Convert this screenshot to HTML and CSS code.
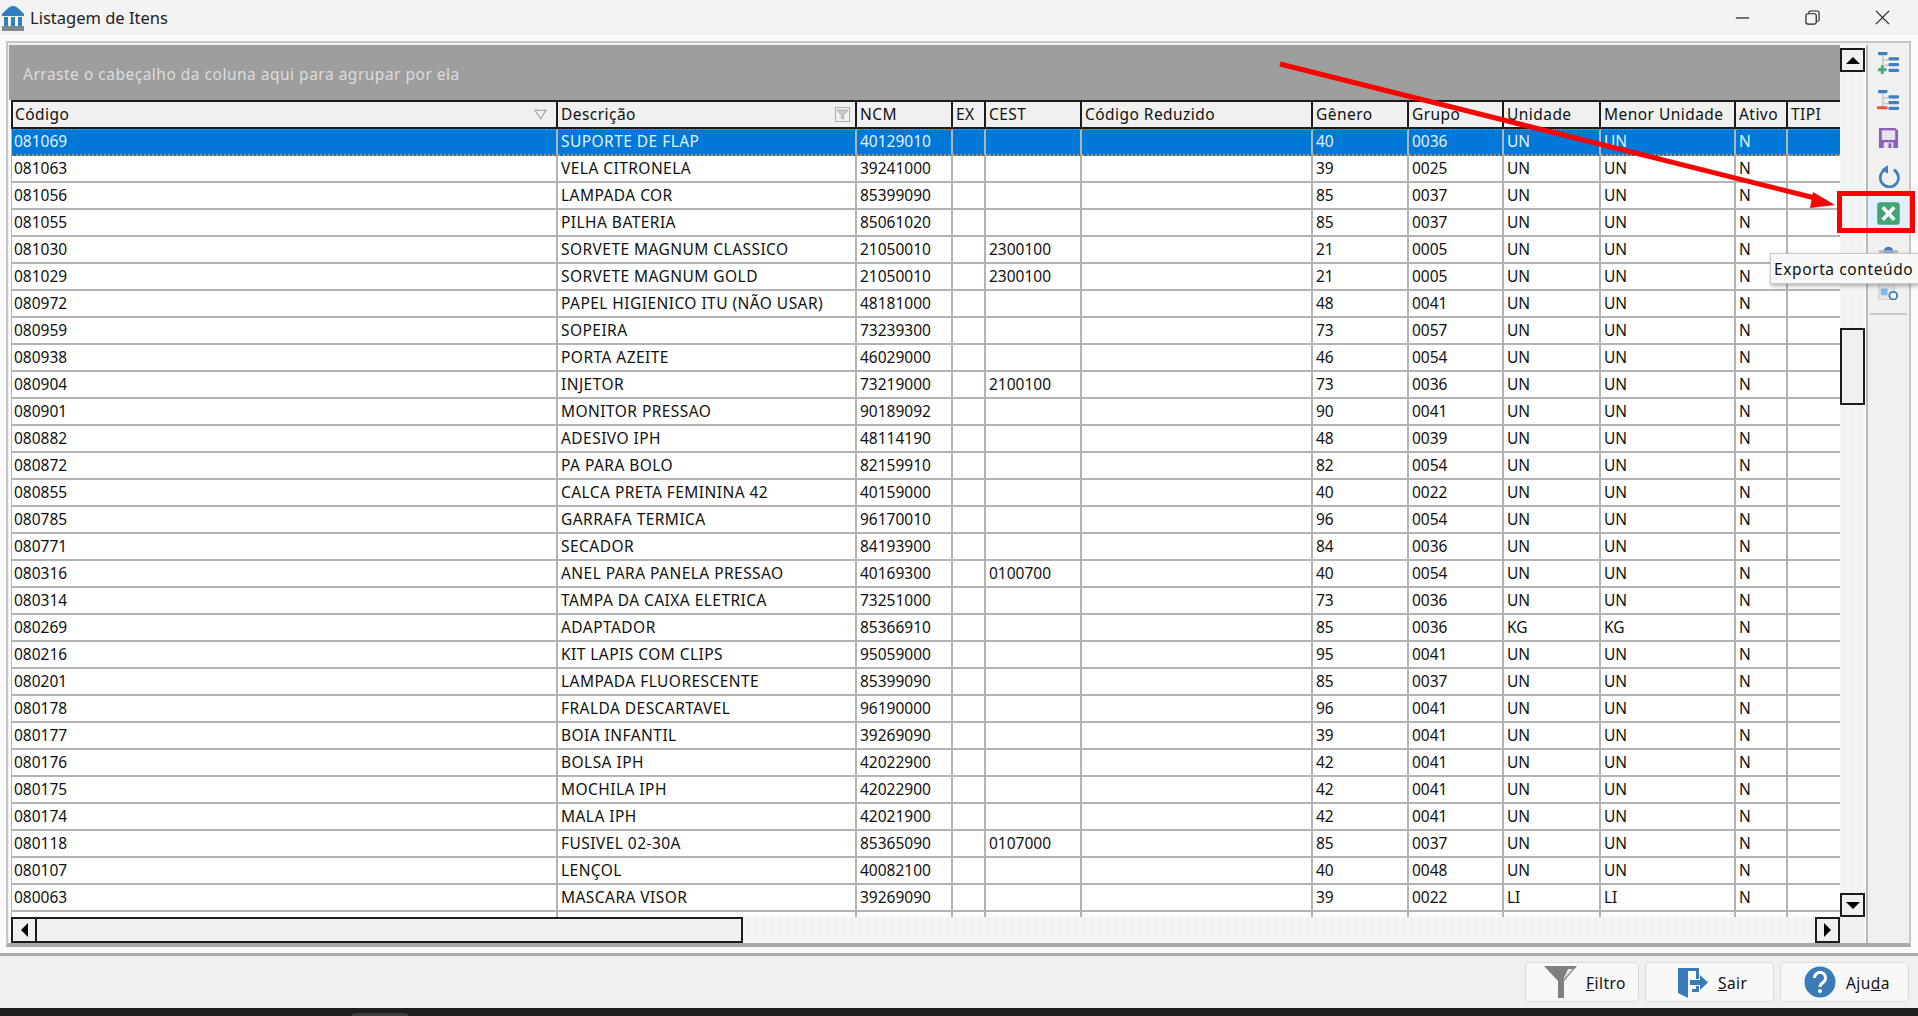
FILE: index.html
```html
<!DOCTYPE html>
<html lang="pt-BR">
<head>
  <meta charset="UTF-8">
  <title>Listagem de Itens</title>
  <link rel="stylesheet" href="styles.css">
</head>
<body>
  <div class="titlebar">
    <svg class="app-icon" viewBox="0 0 22 26">
      <path d="M11 1 C14 1 16 3 20 7 L22 9 V11 H0 V9 L2 7 C6 3 8 1 11 1 Z" fill="#2f7fc1"/>
      <rect x="2" y="12" width="4" height="9" fill="#2f7fc1"/>
      <rect x="9" y="12" width="4" height="9" fill="#2f7fc1"/>
      <rect x="16" y="12" width="4" height="9" fill="#2f7fc1"/>
      <rect x="0" y="21" width="22" height="5" fill="#7d8790"/>
    </svg>
    <span class="title-text">Listagem de Itens</span>
    <div class="window-controls">
      <button class="window-button">
        <svg viewBox="0 0 16 16"><path d="M1 8.5 H15" stroke="#222" stroke-width="1.3" fill="none"/></svg>
      </button>
      <button class="window-button">
        <svg viewBox="0 0 16 16"><rect x="1" y="4" width="11" height="11" rx="2" stroke="#222" stroke-width="1.3" fill="none"/><path d="M4 3.5 V3 a2 2 0 0 1 2 -2 H13 a2 2 0 0 1 2 2 V10 a2 2 0 0 1 -2 2" stroke="#222" stroke-width="1.2" fill="none"/></svg>
      </button>
      <button class="window-button">
        <svg viewBox="0 0 16 16"><path d="M1 1 L15 15 M15 1 L1 15" stroke="#222" stroke-width="1.3" fill="none"/></svg>
      </button>
    </div>
  </div>

  <div class="main">
    <div class="panel">
      <div class="grid-area">
        <div class="group-panel">Arraste o cabeçalho da coluna aqui para agrupar por ela</div>

        <div class="vscroll">
          <div class="scroll-button"><span class="arrow-up"></span></div>
          <div class="vscroll-track"><div class="vscroll-thumb"></div></div>
          <div class="scroll-button"><span class="arrow-down"></span></div>
        </div>

        <div class="table-wrap">
          <table class="items">
            <colgroup>
              <col class="col-codigo"><col class="col-descricao"><col class="col-ncm"><col class="col-ex"><col class="col-cest"><col class="col-reduzido"><col class="col-genero"><col class="col-grupo"><col class="col-unidade"><col class="col-menor"><col class="col-ativo"><col class="col-tipi">
            </colgroup>
            <thead>
              <tr>
                <th><div class="th-inner">Código
                  <svg class="filter-plain" viewBox="0 0 12 12"><path d="M1 2 H11 L6 10 Z" fill="none" stroke="#9a9a9a"/></svg>
                </div></th>
                <th><div class="th-inner">Descrição
                  <span class="filter-box"><svg viewBox="0 0 12 12"><path d="M1 2 H11 L7 6.5 V10 H5 V6.5 Z" fill="#c8c8c8" stroke="#a8a8a8" stroke-width="0.8"/></svg></span>
                </div></th>
                <th>NCM</th><th>EX</th><th>CEST</th><th>Código Reduzido</th><th>Gênero</th><th>Grupo</th><th>Unidade</th><th>Menor Unidade</th><th>Ativo</th><th>TIPI</th>
              </tr>
            </thead>
            <tbody>
              <tr class="selected"><td>081069</td><td>SUPORTE DE FLAP</td><td>40129010</td><td></td><td></td><td></td><td>40</td><td>0036</td><td>UN</td><td>UN</td><td>N</td><td></td></tr>
              <tr><td>081063</td><td>VELA CITRONELA</td><td>39241000</td><td></td><td></td><td></td><td>39</td><td>0025</td><td>UN</td><td>UN</td><td>N</td><td></td></tr>
              <tr><td>081056</td><td>LAMPADA COR</td><td>85399090</td><td></td><td></td><td></td><td>85</td><td>0037</td><td>UN</td><td>UN</td><td>N</td><td></td></tr>
              <tr><td>081055</td><td>PILHA BATERIA</td><td>85061020</td><td></td><td></td><td></td><td>85</td><td>0037</td><td>UN</td><td>UN</td><td>N</td><td></td></tr>
              <tr><td>081030</td><td>SORVETE MAGNUM CLASSICO</td><td>21050010</td><td></td><td>2300100</td><td></td><td>21</td><td>0005</td><td>UN</td><td>UN</td><td>N</td><td></td></tr>
              <tr><td>081029</td><td>SORVETE MAGNUM GOLD</td><td>21050010</td><td></td><td>2300100</td><td></td><td>21</td><td>0005</td><td>UN</td><td>UN</td><td>N</td><td></td></tr>
              <tr><td>080972</td><td>PAPEL HIGIENICO ITU (NÃO USAR)</td><td>48181000</td><td></td><td></td><td></td><td>48</td><td>0041</td><td>UN</td><td>UN</td><td>N</td><td></td></tr>
              <tr><td>080959</td><td>SOPEIRA</td><td>73239300</td><td></td><td></td><td></td><td>73</td><td>0057</td><td>UN</td><td>UN</td><td>N</td><td></td></tr>
              <tr><td>080938</td><td>PORTA AZEITE</td><td>46029000</td><td></td><td></td><td></td><td>46</td><td>0054</td><td>UN</td><td>UN</td><td>N</td><td></td></tr>
              <tr><td>080904</td><td>INJETOR</td><td>73219000</td><td></td><td>2100100</td><td></td><td>73</td><td>0036</td><td>UN</td><td>UN</td><td>N</td><td></td></tr>
              <tr><td>080901</td><td>MONITOR PRESSAO</td><td>90189092</td><td></td><td></td><td></td><td>90</td><td>0041</td><td>UN</td><td>UN</td><td>N</td><td></td></tr>
              <tr><td>080882</td><td>ADESIVO IPH</td><td>48114190</td><td></td><td></td><td></td><td>48</td><td>0039</td><td>UN</td><td>UN</td><td>N</td><td></td></tr>
              <tr><td>080872</td><td>PA PARA BOLO</td><td>82159910</td><td></td><td></td><td></td><td>82</td><td>0054</td><td>UN</td><td>UN</td><td>N</td><td></td></tr>
              <tr><td>080855</td><td>CALCA PRETA FEMININA 42</td><td>40159000</td><td></td><td></td><td></td><td>40</td><td>0022</td><td>UN</td><td>UN</td><td>N</td><td></td></tr>
              <tr><td>080785</td><td>GARRAFA TERMICA</td><td>96170010</td><td></td><td></td><td></td><td>96</td><td>0054</td><td>UN</td><td>UN</td><td>N</td><td></td></tr>
              <tr><td>080771</td><td>SECADOR</td><td>84193900</td><td></td><td></td><td></td><td>84</td><td>0036</td><td>UN</td><td>UN</td><td>N</td><td></td></tr>
              <tr><td>080316</td><td>ANEL PARA PANELA PRESSAO</td><td>40169300</td><td></td><td>0100700</td><td></td><td>40</td><td>0054</td><td>UN</td><td>UN</td><td>N</td><td></td></tr>
              <tr><td>080314</td><td>TAMPA DA CAIXA ELETRICA</td><td>73251000</td><td></td><td></td><td></td><td>73</td><td>0036</td><td>UN</td><td>UN</td><td>N</td><td></td></tr>
              <tr><td>080269</td><td>ADAPTADOR</td><td>85366910</td><td></td><td></td><td></td><td>85</td><td>0036</td><td>KG</td><td>KG</td><td>N</td><td></td></tr>
              <tr><td>080216</td><td>KIT LAPIS COM CLIPS</td><td>95059000</td><td></td><td></td><td></td><td>95</td><td>0041</td><td>UN</td><td>UN</td><td>N</td><td></td></tr>
              <tr><td>080201</td><td>LAMPADA FLUORESCENTE</td><td>85399090</td><td></td><td></td><td></td><td>85</td><td>0037</td><td>UN</td><td>UN</td><td>N</td><td></td></tr>
              <tr><td>080178</td><td>FRALDA DESCARTAVEL</td><td>96190000</td><td></td><td></td><td></td><td>96</td><td>0041</td><td>UN</td><td>UN</td><td>N</td><td></td></tr>
              <tr><td>080177</td><td>BOIA INFANTIL</td><td>39269090</td><td></td><td></td><td></td><td>39</td><td>0041</td><td>UN</td><td>UN</td><td>N</td><td></td></tr>
              <tr><td>080176</td><td>BOLSA IPH</td><td>42022900</td><td></td><td></td><td></td><td>42</td><td>0041</td><td>UN</td><td>UN</td><td>N</td><td></td></tr>
              <tr><td>080175</td><td>MOCHILA IPH</td><td>42022900</td><td></td><td></td><td></td><td>42</td><td>0041</td><td>UN</td><td>UN</td><td>N</td><td></td></tr>
              <tr><td>080174</td><td>MALA IPH</td><td>42021900</td><td></td><td></td><td></td><td>42</td><td>0041</td><td>UN</td><td>UN</td><td>N</td><td></td></tr>
              <tr><td>080118</td><td>FUSIVEL 02-30A</td><td>85365090</td><td></td><td>0107000</td><td></td><td>85</td><td>0037</td><td>UN</td><td>UN</td><td>N</td><td></td></tr>
              <tr><td>080107</td><td>LENÇOL</td><td>40082100</td><td></td><td></td><td></td><td>40</td><td>0048</td><td>UN</td><td>UN</td><td>N</td><td></td></tr>
              <tr><td>080063</td><td>MASCARA VISOR</td><td>39269090</td><td></td><td></td><td></td><td>39</td><td>0022</td><td>LI</td><td>LI</td><td>N</td><td></td></tr>
              <tr><td></td><td></td><td></td><td></td><td></td><td></td><td></td><td></td><td></td><td></td><td></td><td></td></tr>
            </tbody>
          </table>
        </div>

        <div class="hscroll">
          <div class="scroll-button hscroll-left"><span class="arrow-left"></span></div>
          <div class="hscroll-thumb"></div>
          <div class="hscroll-track"></div>
          <div class="scroll-button hscroll-right"><span class="arrow-right"></span></div>
        </div>
        <div class="scroll-corner"></div>
      </div>

      <div class="toolbar">
        <div class="tool-button">
          <svg viewBox="0 0 24 24">
            <rect x="1" y="0" width="10" height="3.4" rx="1.2" fill="#3f7fc0"/>
            <path d="M6 3 V19 M6 8 H12 M6 14 H12" stroke="#c8c8c8" stroke-width="1.6" fill="none"/>
            <rect x="12" y="5.5" width="11" height="3.4" rx="1.2" fill="#3f7fc0"/>
            <rect x="12" y="11.5" width="11" height="3.4" rx="1.2" fill="#3f7fc0"/>
            <rect x="12" y="17.5" width="11" height="3.4" rx="1.2" fill="#3f7fc0"/>
            <path d="M5.5 14 V23 M1 18.5 H10" stroke="#3fae7a" stroke-width="3" fill="none"/>
          </svg>
        </div>
        <div class="tool-button">
          <svg viewBox="0 0 24 24">
            <rect x="1" y="0" width="10" height="3.4" rx="1.2" fill="#3f7fc0"/>
            <path d="M6 3 V17 M6 8 H12 M6 14 H12" stroke="#c8c8c8" stroke-width="1.6" fill="none"/>
            <rect x="12" y="5.5" width="11" height="3.4" rx="1.2" fill="#3f7fc0"/>
            <rect x="12" y="11.5" width="11" height="3.4" rx="1.2" fill="#3f7fc0"/>
            <rect x="12" y="17.5" width="11" height="3.4" rx="1.2" fill="#3f7fc0"/>
            <path d="M0 18.5 H11" stroke="#e0573f" stroke-width="3" fill="none"/>
          </svg>
        </div>
        <div class="tool-button">
          <svg viewBox="0 0 24 24">
            <path d="M3 1 H19 L22 4 V21 a1 1 0 0 1 -1 1 H3 a1 1 0 0 1 -1 -1 V2 a1 1 0 0 1 1 -1 Z" fill="#8e5fb8"/>
            <rect x="5" y="3.5" width="14" height="10" fill="#e6e2ea"/>
            <rect x="7" y="16" width="10" height="6" fill="#e6e2ea"/>
            <rect x="12" y="17" width="3" height="5" fill="#8e5fb8"/>
          </svg>
        </div>
        <div class="tool-button">
          <svg viewBox="0 0 24 24">
            <path d="M7.5 5.5 A9.5 9.5 0 1 0 17.5 5" stroke="#3f7fc0" stroke-width="2.8" fill="none"/>
            <path d="M11.5 0 L11.5 9 L4.5 5 Z" fill="#3f7fc0"/>
          </svg>
        </div>
        <div class="tool-button tool-hover">
          <svg viewBox="0 0 24 24">
            <rect x="0.2" y="0.2" width="23.6" height="23.6" rx="3.5" fill="#41a673"/>
            <path d="M6 5.5 L18 18.5 M18 5.5 L6 18.5" stroke="#fff" stroke-width="3.6" fill="none"/>
          </svg>
        </div>
        <div class="tool-button">
          <svg viewBox="0 0 24 24">
            <circle cx="12" cy="12" r="5" fill="#3f7fc0"/>
            <path d="M2 12 H22" stroke="#a9b4bf" stroke-width="2.5" fill="none"/>
          </svg>
        </div>
        <div class="tool-button">
          <svg viewBox="0 0 24 24">
            <path d="M2 3 H13 L18 8 V24 H2 Z" fill="#e4e7ea" stroke="#c4c8cc"/>
            <rect x="4" y="12" width="7" height="7" fill="#7fb7e6"/>
            <circle cx="17" cy="19.5" r="4" fill="#fff" stroke="#3f7fc0" stroke-width="2"/>
          </svg>
        </div>
        <div class="toolbar-divider"></div>
      </div>
    </div>
  </div>

  <div class="footer">
    <button class="action-button action-filtro">
      <svg class="action-icon" viewBox="0 0 33 32">
        <path d="M0 0 H33 L20 15 V32 H14 V15 Z" fill="#7f7f7f"/>
        <path d="M24 3 H29 L19 14 Z" fill="#e8e8e8"/>
      </svg>
      <span><u>F</u>iltro</span>
    </button>
    <button class="action-button action-sair">
      <svg class="action-icon" viewBox="0 0 30 32">
        <path d="M0 2 H21 V13 H18 V5 H10 V32 L0 27 Z" fill="#3a7cb8"/>
        <path d="M21 20 V26 H14 V23 H18 V20 Z" fill="#3a7cb8"/>
        <path d="M12 14 H22 V9 L30 16.5 L22 24 V19 H12 Z" fill="#3a7cb8"/>
      </svg>
      <span><u>S</u>air</span>
    </button>
    <button class="action-button action-ajuda">
      <svg class="action-icon" viewBox="0 0 32 32">
        <circle cx="16" cy="16" r="15.5" fill="#3a7cb8"/>
        <path d="M10.5 12 a5.5 5.5 0 1 1 8.5 4.5 c-2 1.4 -3 2 -3 4.5" stroke="#fff" stroke-width="3" fill="none"/>
        <circle cx="16" cy="25" r="2" fill="#fff"/>
      </svg>
      <span>Aju<u>d</u>a</span>
    </button>
  </div>

  <div class="taskbar"><div class="taskbar-tab"></div></div>

  <!-- annotation drawn over the window -->
  <svg class="annotation" viewBox="0 0 1918 1016">
    <path d="M1280 64 L1815 198" stroke="#f00" stroke-width="5" fill="none"/>
    <path d="M1835 205 L1813 192 L1810 208 Z" fill="#f00"/>
  </svg>
  <div class="annotation-box"></div>
  <div class="tooltip">Exporta conteúdo</div>
</body>
</html>
```

FILE: styles.css
```css
:root {
  --face: #f0f0f0;
  --grid-line: #b4b4b4;
  --edge: #1c1c1c;
  --selected: #0078d7;
  --blue: #3f7fc0;
}

* {
  box-sizing: border-box;
}

body {
  margin: 0;
  width: 1918px;
  height: 1016px;
  overflow: hidden;
  position: relative;
  display: flex;
  flex-direction: column;
  background-color: var(--face);
  color: #111;
  font-family: "Noto Sans", "Open Sans", sans-serif;
  font-size: 15.5px;
}

/* title bar */
.titlebar {
  height: 35px;
  display: flex;
  align-items: center;
  background-color: #f3f3f3;
  padding-left: 2px;
}

.app-icon {
  width: 22px;
  height: 26px;
}

.title-text {
  margin-left: 6px;
  font-size: 16.5px;
  color: #222;
}

.window-controls {
  margin-left: auto;
  display: flex;
  padding-right: 1px;
}

.window-button {
  width: 70px;
  height: 35px;
  border: none;
  background: transparent;
  display: flex;
  align-items: center;
  justify-content: center;
  padding: 0;
}

.window-button svg {
  width: 15px;
  height: 15px;
}

/* main panel */
.main {
  height: 918px;
  padding: 6px 7px 6px 6px;
  background-color: #fbfbfb;
}

.panel {
  height: 906px;
  display: flex;
  border: 2px solid #c6c6c6;
  border-bottom: 4px solid #a9a9a9;
  padding: 2px 0 0 1px;
  background-color: var(--face);
}

.grid-area {
  width: 1857px;
  display: grid;
  grid-template-columns: 1831px 25px;
  grid-template-rows: 55px 817px 26px;
  background-color: #fff;
}

.group-panel {
  background-color: #9e9e9e;
  color: #dcdcdc;
  padding: 19px 0 0 14px;
  font-size: 15.5px;
  letter-spacing: 0.5px;
  line-height: 20px;
}

.vscroll {
  grid-row: 1 / 3;
  grid-column: 2;
  display: flex;
  flex-direction: column;
  padding-top: 3px;
  background-color: #f6f6f6;
}

.vscroll .scroll-button {
  height: 24px;
}

.vscroll-track {
  flex: 1;
  padding-top: 256px;
  background: repeating-conic-gradient(#ffffff 0 25%, #e9e9e9 0 50%) 0 0 / 2px 2px;
}

.vscroll-thumb {
  height: 77px;
  border: 2px solid var(--edge);
  background-color: var(--face);
}

.scroll-button {
  width: 25px;
  flex: none;
  border: 2px solid var(--edge);
  background-color: var(--face);
  display: flex;
  align-items: center;
  justify-content: center;
}

.arrow-up,
.arrow-down {
  width: 0;
  height: 0;
  border-left: 7px solid transparent;
  border-right: 7px solid transparent;
}

.arrow-up {
  border-bottom: 7px solid #000;
}

.arrow-down {
  border-top: 7px solid #000;
}

.arrow-left,
.arrow-right {
  width: 0;
  height: 0;
  border-top: 7px solid transparent;
  border-bottom: 7px solid transparent;
}

.arrow-left {
  border-right: 7px solid #000;
}

.arrow-right {
  border-left: 7px solid #000;
}

/* table */
.table-wrap {
  padding-left: 2px;
  overflow: hidden;
  background-color: #fff;
}

.items {
  table-layout: fixed;
  width: 1829px;
  border-collapse: separate;
  border-spacing: 0;
}

.col-codigo { width: 547px; }
.col-descricao { width: 299px; }
.col-ncm { width: 96px; }
.col-ex { width: 33px; }
.col-cest { width: 96px; }
.col-reduzido { width: 231px; }
.col-genero { width: 96px; }
.col-grupo { width: 95px; }
.col-unidade { width: 97px; }
.col-menor { width: 135px; }
.col-ativo { width: 52px; }
.col-tipi { width: 52px; }

.items th {
  height: 29px;
  padding: 0 3px;
  background-color: var(--face);
  border-top: 2px solid var(--edge);
  border-right: 2px solid var(--edge);
  border-bottom: 2px solid var(--edge);
  font-weight: 400;
  text-align: left;
  line-height: 1;
  letter-spacing: 0.45px;
  white-space: nowrap;
  overflow: hidden;
}

.items th:first-child {
  border-left: 2px solid var(--edge);
  padding-left: 2px;
}

.items th:last-child {
  border-right: none;
}

.th-inner {
  display: flex;
  align-items: center;
  justify-content: space-between;
}

.filter-plain {
  width: 13px;
  height: 13px;
  margin-right: 6px;
}

.filter-box {
  width: 15px;
  height: 15px;
  border: 1px solid #b0b0b0;
  display: flex;
  margin-right: 2px;
}

.items td {
  height: 27px;
  padding: 0 3px;
  border-right: 2px solid var(--grid-line);
  border-bottom: 2px solid var(--grid-line);
  line-height: 1;
  white-space: nowrap;
  overflow: hidden;
}

.items td:first-child {
  border-left: 1px solid var(--grid-line);
  padding-left: 2px;
}

/* description text runs wider than the digits in the reference font */
.items td:nth-child(2) {
  letter-spacing: 0.45px;
}

.items td:last-child {
  border-right: none;
}

.items .selected td {
  background-color: var(--selected);
  color: #e4f0fb;
  border-top: 1px dotted #c98a4a;
  border-bottom: 2px dotted #c98a4a;
}

/* horizontal scrollbar */
.hscroll {
  margin-left: 2px;
  display: flex;
  background: repeating-conic-gradient(#ffffff 0 25%, #e9e9e9 0 50%) 0 0 / 2px 2px;
}

.hscroll .scroll-button {
  height: 26px;
}

.hscroll-left {
  width: 26px;
}

.hscroll-thumb {
  width: 706px;
  border: 2px solid var(--edge);
  border-left: none;
  background-color: var(--face);
}

.hscroll-track {
  flex: 1;
}

.scroll-corner {
  background-color: var(--face);
}

/* right toolbar */
.toolbar {
  width: 41px;
  margin-left: 2px;
  display: flex;
  flex-direction: column;
  position: relative;
  box-shadow: -2px 0 0 #b8b8b8;
}

.tool-button {
  height: 37.5px;
  flex: none;
  display: flex;
  align-items: center;
  justify-content: center;
}

.tool-button svg {
  width: 23px;
  height: 23px;
}

.tool-hover {
  background-color: #e0effb;
}

.toolbar-divider {
  margin: 5px 2px 0;
  border-top: 2px solid #c8c8c8;
}

/* bottom buttons */
.footer {
  height: 55px;
  border-top: 3px solid #aaaaaa;
  background-color: var(--face);
  display: flex;
  justify-content: flex-end;
  gap: 6px;
  padding: 6px 9px 0 0;
}

.action-button {
  height: 40px;
  display: flex;
  align-items: center;
  padding: 0;
  border: 1px solid #dadada;
  border-radius: 5px;
  background-color: #f8f8f8;
  color: #111;
  font-family: inherit;
  font-size: 15.5px;
  letter-spacing: 0.45px;
}

.action-icon {
  height: 32px;
  flex: none;
}

.action-button span {
  padding-top: 2px;
}

.action-filtro {
  width: 114px;
  padding-left: 18px;
  gap: 9px;
}

.action-filtro .action-icon {
  width: 33px;
}

.action-sair {
  width: 129px;
  padding-left: 32px;
  gap: 10px;
}

.action-sair .action-icon {
  width: 30px;
}

.action-ajuda {
  width: 129px;
  padding-left: 23px;
  gap: 10px;
}

.action-ajuda .action-icon {
  width: 32px;
}

.taskbar {
  height: 8px;
  background-color: #1f1f1f;
  padding: 5px 0 0 352px;
}

.taskbar-tab {
  width: 56px;
  height: 3px;
  border-radius: 3px 3px 0 0;
  background-color: #3d3d3d;
}

/* overlays */
.annotation {
  position: absolute;
  top: 0;
  left: 0;
  width: 1918px;
  height: 1016px;
  pointer-events: none;
}

.annotation-box {
  position: absolute;
  left: 1837px;
  top: 191px;
  width: 78px;
  height: 42px;
  border: 5px solid #f00;
}

.tooltip {
  position: absolute;
  left: 1770px;
  top: 253px;
  width: 148px;
  height: 31px;
  padding: 0 0 0 3px;
  display: flex;
  align-items: center;
  background-color: #f8f8f8;
  border: 1px solid #c8c8c8;
  border-right: none;
  box-shadow: 1px 2px 4px rgba(0, 0, 0, 0.3);
  font-size: 15.5px;
  letter-spacing: 0.6px;
  white-space: nowrap;
}
```
